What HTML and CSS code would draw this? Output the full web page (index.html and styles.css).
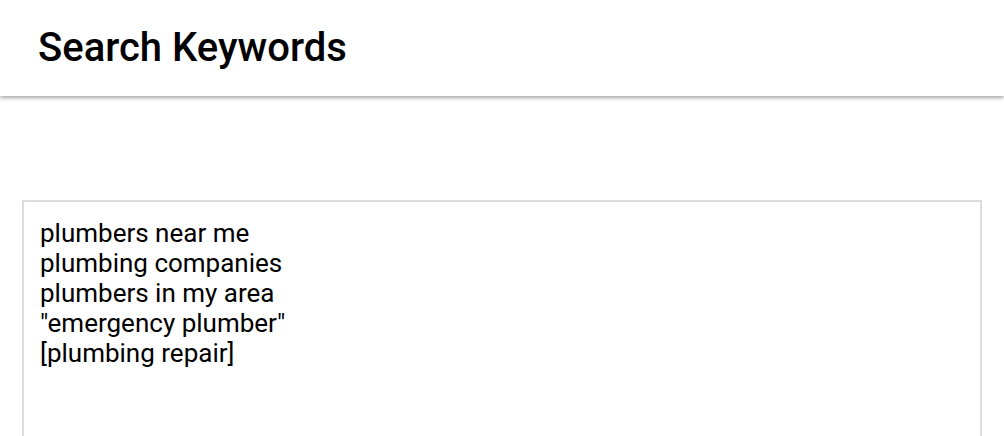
FILE: index.html
```html
<!DOCTYPE html>
<html lang="en">
<head>
<meta charset="utf-8">
<title>Search Keywords</title>
<link rel="stylesheet" href="styles.css">
</head>
<body>
<header class="topbar">
  <h1 class="title">Search Keywords</h1>
</header>
<main class="content">
  <div class="keywords">
    <div class="line">plumbers near me</div>
    <div class="line">plumbing companies</div>
    <div class="line">plumbers in my area</div>
    <div class="line">"emergency plumber"</div>
    <div class="line">[plumbing repair]</div>
  </div>
</main>
</body>
</html>
```
FILE: styles.css
```css
html, body {
  margin: 0;
  padding: 0;
  background: #ffffff;
  font-family: Roboto, "Liberation Sans", Arial, sans-serif;
  color: #000000;
}
.topbar {
  height: 96px;
  display: flex;
  align-items: center;
  padding-left: 38px;
  background: #ffffff;
  box-shadow: 0 2px 4px rgba(0, 0, 0, 0.35);
  position: relative;
  z-index: 1;
}
.title {
  margin: 0;
  font-size: 40px;
  font-weight: 500;
  line-height: 1;
  color: #000;
}
.content {
  padding: 104px 22px 0 22px;
}
.keywords {
  border: 2px solid #dadce0;
  padding: 16px 16px;
  height: 300px;
  font-size: 26px;
  line-height: 30px;
  color: #000;
}
```
